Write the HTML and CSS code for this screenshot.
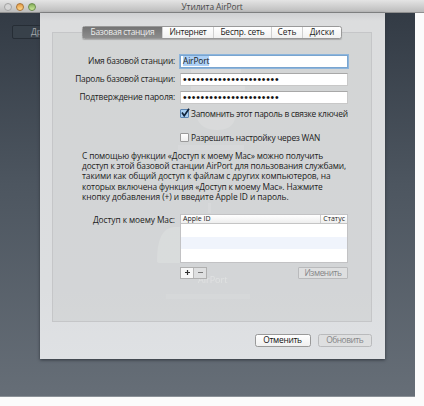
FILE: index.html
```html
<!DOCTYPE html>
<html lang="ru">
<head>
<meta charset="utf-8">
<title>Утилита AirPort</title>
<link rel="stylesheet" href="styles.css">
</head>
<body>
<header class="titlebar">
  <div class="lights"><i class="light gray"></i><i class="light amber"></i><i class="light green"></i></div>
  <h1>Утилита AirPort</h1>
</header>
<main class="desktop">
  <div class="back-button">Др</div>
  <section class="sheet">
    <svg class="ghost" width="345" height="346" viewBox="39 13 345 346" aria-hidden="true">
      <g fill="#fff">
        <path opacity=".25" d="M190 69h50v4h-50zM190 86h54v4h-54zM196 118h38q-2 12-18 12t-20-12z"/>
        <path opacity=".2" d="M207 203h3v10h-3zM177 145h66v5h-66z"/>
        <path opacity=".3" d="M156 261q0-33 17-34h70q11 1 11 34-1 2-3 2h-92q-3 0-3-2z"/>
        <path opacity=".14" d="M165 294h84v5h-84z"/>
      </g>
      <text x="197" y="283" fill="#fff" opacity=".6" font-size="9">AirPort</text>
    </svg>
    <div class="panel">
      <nav class="tabs">
        <span class="tab active"><b>Базовая станция</b></span>
        <span class="tab net"><b>Интернет</b></span>
        <span class="tab wifi"><b>Беспр. сеть</b></span>
        <span class="tab lan"><b>Сеть</b></span>
        <span class="tab disks"><b>Диски</b></span>
      </nav>
      <div class="row name"><label class="l-name">Имя базовой станции:</label><div class="field focused"><mark>AirPort</mark></div></div>
      <div class="row"><label class="l-pass">Пароль базовой станции:</label><div class="field"><span class="dots">••••••••••••••••••••••</span></div></div>
      <div class="row"><label class="l-confirm">Подтверждение пароля:</label><div class="field"><span class="dots">••••••••••••••••••••••</span></div></div>
      <div class="check first">
        <span class="box on"><svg width="11" height="11" viewBox="0 0 11 11"><path d="M2 4.5 4.2 7.7 9 .8" fill="none" stroke="#10243c" stroke-width="1.7"/></svg></span>
        <span class="c-save">Запомнить этот пароль в связке ключей</span>
      </div>
      <div class="check second"><span class="box"></span><span class="c-wan">Разрешить настройку через WAN</span></div>
      <p class="info">
        <span class="p1">С помощью функции «Доступ к моему Mac» можно получить</span>
        <span class="p2">доступ к этой базовой станции AirPort для пользования службами,</span>
        <span class="p3">такими как общий доступ к файлам с других компьютеров, на</span>
        <span class="p4">которых включена функция «Доступ к моему Mac». Нажмите</span>
        <span class="p5">кнопку добавления (+) и введите Apple ID и пароль.</span>
      </p>
      <div class="access">
        <label class="l-access">Доступ к моему Mac:</label>
        <div class="list">
          <div class="table">
            <div class="thead"><span>Apple ID</span><span class="status">Статус</span></div>
            <div class="tr"></div><div class="tr alt"></div>
          </div>
          <div class="tools">
            <div class="pm"><span><svg width="7" height="7"><path d="M3.5 1v5M1 3.5h5" stroke="#333" stroke-width="1.2"/></svg></span><span class="off"><svg width="7" height="7"><path d="M1 3.5h5" stroke="#777"/></svg></span></div>
            <div class="btn edit off"><span>Изменить</span></div>
          </div>
        </div>
      </div>
    </div>
    <footer class="actions">
      <div class="btn cancel"><span>Отменить</span></div>
      <div class="btn update off"><span>Обновить</span></div>
    </footer>
  </section>
</main>
</body>
</html>
```
FILE: styles.css
```css
* { box-sizing: border-box; }
body {
  margin: 0; width: 424px; height: 406px; overflow: hidden;
  background: #fbfbfb; color: #1c1c1c;
  font: 500 8.4px/10px "Open Sans", "Noto Sans", sans-serif;
  white-space: nowrap;
}
svg { display: block; }
.titlebar {
  height: 13px; display: grid; grid-template-columns: 181.5px 1fr; align-items: center;
  background: linear-gradient(#e4e4e4, #bcbcbc); border-bottom: 1px solid #8f8f8f;
}
.titlebar h1 { margin: 1px 0 0; font-size: 8.4px; line-height: 12px; font-weight: 500; color: #484848; letter-spacing: -.1px; }
.lights { display: flex; gap: 4px; padding-left: 4px; }
.light { width: 8px; height: 8px; border-radius: 50%; border: 1px solid #8b8b8b; }
.gray { background: #d5d5d5; border-color: #a2a2a2; }
.amber { background: linear-gradient(#e59a45, #ffd98c); border-color: #a87336; }
.green { background: linear-gradient(#84ae58, #cdea9a); border-color: #6b8c4c; }
.desktop {
  position: relative; width: 415px; height: 384px; padding-left: 39.5px;
  background: linear-gradient(#333b45, #4d5660 45%, #666e77); border-bottom: 1px solid #8b9197;
}
.back-button {
  position: absolute; left: 12px; top: 12px; width: 40px; height: 14px; padding-left: 18px;
  border: 1px solid #262d35; border-radius: 2px; background: #38414a; color: #a3a8ad; line-height: 12px;
}
.sheet {
  position: relative; width: 345px; height: 346px; padding: 19px 12.5px 0;
  background: linear-gradient(#cfd0d2, #dcddde 8px, #dcdee0 80%, #dfe1e4);
  box-shadow: 0 1px 3px #30363e;
}
.ghost { position: absolute; left: 0; top: 0; filter: blur(.7px); }
.panel {
  position: relative; height: 290px; padding: 0 23px 0 29px;
  border: 1px solid #c5c6c8; background: rgba(198, 199, 201, .38);
}
.tabs {
  display: flex; width: 260px; height: 12.5px; margin-top: -7px;
  border: 1px solid #999; border-radius: 2.5px; background: linear-gradient(#fff, #f1f1f1);
  box-shadow: 0 1px 1px #aaa;
}
.tab { display: flex; justify-content: center; align-items: center; border-left: 1px solid #d0d0d0; }
.tab b { font-weight: 500; }
.tab.active { width: 79px; border: 0; background: linear-gradient(#747474, #8d8d8d); color: #eee; letter-spacing: -.3px; }
.net { width: 51px; letter-spacing: -.3px; }
.wifi { width: 58px; letter-spacing: -.18px; }
.lan { width: 31px; }
.disks { flex: 1; }
.row { display: grid; grid-template-columns: 93px 168px; column-gap: 5px; height: 13px; margin-bottom: 5px; align-items: center; }
.row label { justify-self: end; }
.l-name, .l-pass { letter-spacing: -.22px; }
.l-confirm { letter-spacing: -.18px; }
.l-access { letter-spacing: -.08px; }
.row.name { margin-top: 16px; }
.field { display: flex; align-items: center; height: 13px; padding-left: 2px; background: #fff; border: 1px solid #c8c8c8; border-top-color: #a8a8a8; }
.field.focused { border-color: #79a5d0; box-shadow: 0 0 0 1px #8db5dc; }
mark { background: #acd0f6; color: #222; line-height: 10px; letter-spacing: -.15px; }
.dots { font: 10.4px/11px "Liberation Sans", sans-serif; color: #111; letter-spacing: .74px; }
.check { display: flex; align-items: center; gap: 2.5px; height: 10px; margin-left: 98px; }
.check.first { margin-top: 4px; }
.check.second { margin-top: 14px; }
.c-save { letter-spacing: -.24px; }
.c-wan { letter-spacing: -.26px; }
.box { width: 8.5px; height: 8.5px; border: 1px solid #9a9a9a; border-radius: 1px; background: linear-gradient(#fff, #eee); }
.box.on { border-color: #5d86b2; background: #a9cef1; }
.box svg { margin: -2px 0 0 -1px; }
.info { display: grid; grid-auto-rows: 10.35px; margin: 8.2px 0 0; justify-items: start; line-height: 10.35px; }
.p1 { letter-spacing: -.14px; }
.p2 { letter-spacing: -.14px; }
.p3 { letter-spacing: -.09px; }
.p4 { letter-spacing: -.13px; }
.p5 { letter-spacing: -.09px; }
.access { display: grid; grid-template-columns: 93px 168px; column-gap: 5px; margin-top: 12px; }
.access label { justify-self: end; line-height: 11px; }
.table { height: 49px; border: 1px solid #c2c2c4; background: #fff; }
.thead { display: flex; justify-content: space-between; height: 9px; padding: 0 2px; font-size: 7px; line-height: 8px; border-bottom: 1px solid #c5c5c5; background: linear-gradient(#fff, #eee); }
.status { border-left: 1px solid #ccc; padding-left: 2px; }
.tr { height: 12.5px; }
.alt { background: #f0f4fc; height: 12px; }
.tools { display: flex; justify-content: space-between; margin-top: 3.5px; }
.pm { display: flex; width: 27px; height: 12px; border: 1px solid #b0b0b0; background: #f8f8f8; }
.pm span { flex: 1; display: flex; align-items: center; justify-content: center; }
.pm .off { background: #dedfe0; border-left: 1px solid #b8b8b8; }
.btn { display: flex; align-items: center; justify-content: center; height: 13px; border: 1px solid #999; border-radius: 2.5px; background: linear-gradient(#fff, #efefef); color: #111; letter-spacing: -.28px; }
.btn.off { border-color: #b9babc; background: #dedfe0; color: #858688; letter-spacing: -.46px; }
.edit { width: 50px; height: 12px; border-radius: 1px; }
.actions { display: flex; justify-content: flex-end; gap: 7px; margin-top: 11.5px; }
.cancel { width: 56px; }
.update { width: 54.5px; }
```
